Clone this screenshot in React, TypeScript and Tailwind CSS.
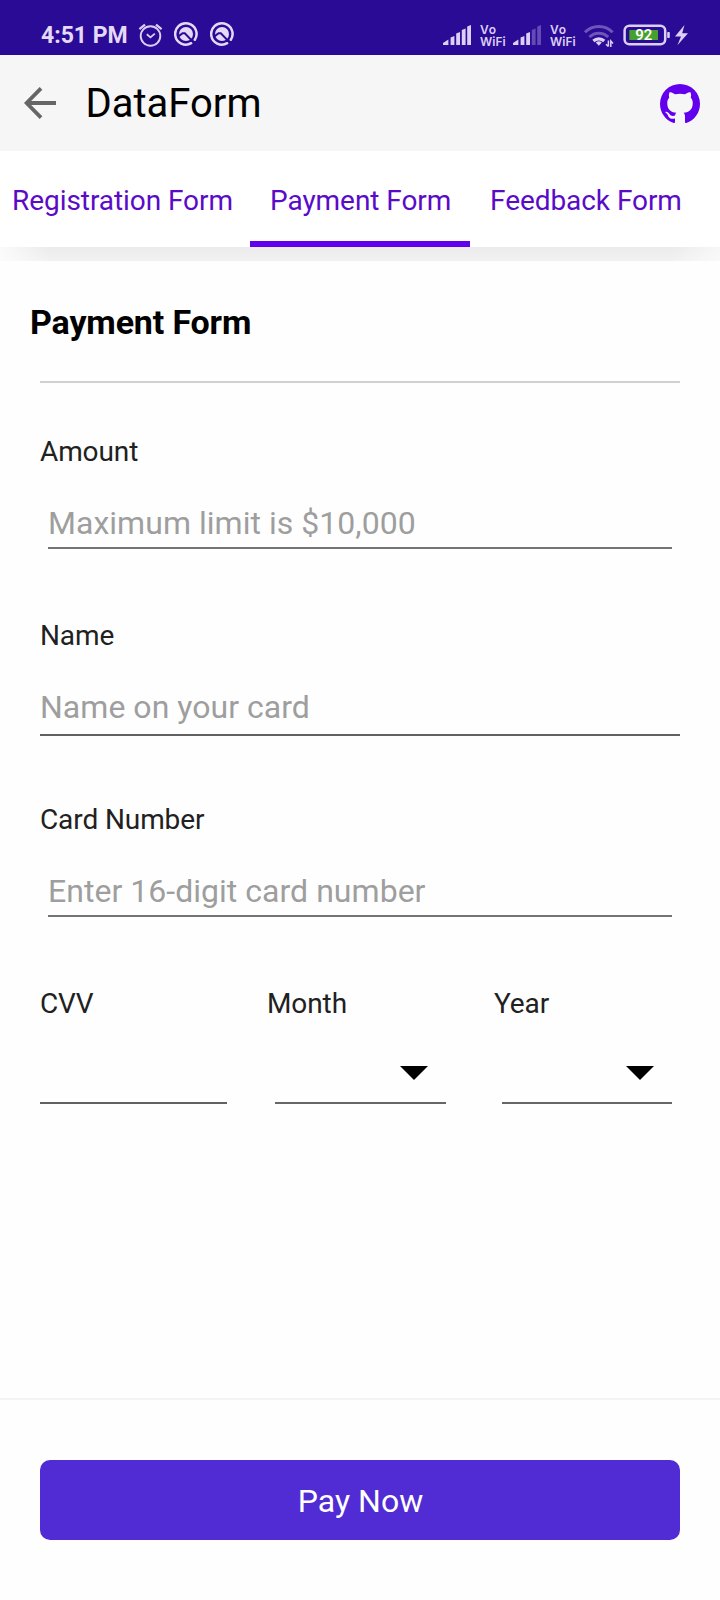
import React from "react";

const SIGNAL_X = [443, 450.6, 456.2, 461.8, 467.2];
const SIGNAL_TOP = [40.5, 36, 32, 28.5, 25];

function Signal({ strength }: { strength: number }) {
  return (
    <svg className="h-[55px] w-[30px]" viewBox="442 0 30 55" fill="#dccff5">
      <path d="M443 45V43L448.4 39.5V45Z" />
      {SIGNAL_X.slice(1).map((x, i) => (
        <path
          key={x}
          opacity={i + 1 < strength ? 1 : 0.32}
          d={`M${x} 45V${SIGNAL_TOP[i + 1] + 1.5}L${x + 3.8} ${SIGNAL_TOP[i + 1]}V45Z`}
        />
      ))}
    </svg>
  );
}

function VoWifi() {
  return (
    <div className="w-7 pt-6 font-[Inter,sans-serif] text-[12px] font-semibold leading-[12px] text-[#dccff5]">
      <div className="tracking-[0.8px]">Vo</div>
      <div>WiFi</div>
    </div>
  );
}

function CircleBadge() {
  return (
    <svg className="h-[55px] w-6" viewBox="174 0 24 55" fill="none">
      <path d="M191.2 43.2A10.7 10.7 0 1 1 194.8 39.8" stroke="#e4daf8" strokeWidth="2.5" strokeLinecap="round" />
      <circle cx="186" cy="34" r="7" fill="#e4daf8" />
      <path d="M178.4 36.4L182.6 33.2H184.8L193.6 42.4" stroke="#2a0b95" strokeWidth="2" />
    </svg>
  );
}

function StatusBar() {
  return (
    <div className="flex h-[55px] items-start bg-[#2a0b95] pl-[41px] pr-[30px]">
      <div className="w-[85px] whitespace-nowrap pt-[21px] text-[23px] font-bold leading-[30px] text-[#e4daf8]">4:51 PM</div>
      <svg className="ml-3 h-[55px] w-[25px]" viewBox="138 0 25 55" fill="none" stroke="#dccff5" strokeWidth="1.9">
        <circle cx="150.5" cy="36" r="9.8" />
        <path d="M146.8 34.2L150.5 37.4L154.8 33.6" strokeWidth="1.8" />
        <path d="M139.4 29.2L145 24.6M161.6 29.2L156 24.6" strokeWidth="2.2" />
      </svg>
      <div className="ml-[11px] flex gap-3">
        <CircleBadge />
        <CircleBadge />
      </div>
      <div className="ml-auto flex">
        <Signal strength={5} />
        <div className="ml-2"><VoWifi /></div>
        <div className="ml-1"><Signal strength={3} /></div>
        <div className="ml-2"><VoWifi /></div>
        <svg className="ml-[5px] h-[55px] w-8" viewBox="583 0 32 55" fill="none" stroke="#dccff5">
          <path d="M585 32.3A19.5 19.5 0 0 1 612.6 32.3" strokeWidth="3" opacity="0.38" />
          <path d="M589.4 37A13.5 13.5 0 0 1 608.2 37" strokeWidth="3" opacity="0.38" />
          <path d="M593.4 41A7.8 7.8 0 0 1 604.2 41" strokeWidth="3.2" />
          <path d="M595.8 42.6A4.4 4.4 0 0 1 601.8 42.6L598.8 45.8Z" fill="#dccff5" stroke="none" />
          <path d="M608.4 40.5V46.5M606 44.2L608.4 46.5M610.8 47V41L613 43.4" strokeWidth="1.5" />
        </svg>
        <svg className="ml-[7px] h-[55px] w-[68px]" viewBox="622 0 68 55" fill="#dccff5">
          <rect x="624.6" y="25.7" width="40.6" height="18.6" rx="4.8" fill="none" stroke="#dccff5" strokeWidth="2.5" />
          <rect x="629.3" y="30" width="28.7" height="10" fill="#45a02c" />
          <text x="643.7" y="40.3" textAnchor="middle" className="fill-white text-[15px] font-semibold">92</text>
          <rect x="667.2" y="32" width="2.6" height="6" rx="0.8" />
          <path d="M684.5 25L675 36.5H681L677.4 45.2L688 33.2H682.2Z" />
        </svg>
      </div>
    </div>
  );
}

function AppBar() {
  return (
    <header className="flex h-24 items-center bg-[#f6f6f6] pl-6 pr-5">
      <svg className="h-8 w-8" viewBox="0 0 32 32" fill="none" stroke="#666666" strokeWidth="3.8">
        <path d="M32 16H3M17 1.4L2.6 16L17 30.6" />
      </svg>
      <h1 className="ml-[29.5px] pt-0.5 text-[40px] leading-[48px] text-black">DataForm</h1>
      <svg className="ml-auto mt-px h-10 w-10" viewBox="2 2 20 20" fill="#6200ee">
        <path d="M12,2A10,10 0 0,0 2,12C2,16.42 4.87,20.17 8.84,21.5C9.34,21.58 9.5,21.27 9.5,21C9.5,20.77 9.5,20.14 9.5,19.31C6.73,19.91 6.14,17.97 6.14,17.97C5.68,16.81 5.03,16.5 5.03,16.5C4.12,15.88 5.1,15.9 5.1,15.9C6.1,15.97 6.63,16.93 6.63,16.93C7.5,18.45 8.97,18 9.54,17.76C9.63,17.11 9.89,16.67 10.17,16.42C7.95,16.17 5.62,15.31 5.62,11.5C5.62,10.39 6,9.5 6.65,8.79C6.55,8.54 6.2,7.5 6.75,6.15C6.75,6.15 7.59,5.88 9.5,7.17C10.29,6.95 11.15,6.84 12,6.84C12.85,6.84 13.71,6.95 14.5,7.17C16.41,5.88 17.25,6.15 17.25,6.15C17.8,7.5 17.45,8.54 17.35,8.79C18,9.5 18.38,10.39 18.38,11.5C18.38,15.32 16.04,16.16 13.81,16.41C14.17,16.72 14.5,17.33 14.5,18.26C14.5,19.6 14.5,20.68 14.5,21C14.5,21.27 14.66,21.59 15.17,21.5C19.14,20.16 22,16.42 22,12A10,10 0 0,0 12,2Z" />
      </svg>
    </header>
  );
}

function Tabs() {
  const tab = "flex h-24 items-start whitespace-nowrap pt-[30px] text-[28px] leading-10 tracking-[-0.06px] text-[#5a0bc8]";
  return (
    <nav className="flex h-24 bg-white">
      <button className={`${tab} w-[250px] pl-3`}>Registration Form</button>
      <button className={`${tab} w-[220px] border-b-[6px] border-[#6200ee] pl-5`}>Payment Form</button>
      <button className={`${tab} w-[250px] pl-5`}>Feedback Form</button>
    </nav>
  );
}

const LABEL = "block h-10 pt-px text-[28px] leading-10 tracking-[-0.1px] text-[#212121]";

function Field({ label, placeholder, inset }: { label: string; placeholder: string; inset: boolean }) {
  return (
    <label className={`block h-[184px] ${inset ? "px-2" : ""}`}>
      <span className={`${LABEL} ${inset ? "-ml-2" : ""}`}>{label}</span>
      <input
        className={`mt-8 block w-full border-b-2 p-0 text-[32px] leading-10 tracking-[0.03px] outline-none placeholder:text-[#9e9e9e] ${
          inset ? "h-[46px] border-[#757575] pb-1" : "h-[49px] border-[#616161] pb-[7px]"
        }`}
        placeholder={placeholder}
      />
    </label>
  );
}

function Picker({ label }: { label: string }) {
  return (
    <div>
      <span className={LABEL}>{label}</span>
      <div className="ml-2 mt-8 flex h-[49px] justify-end border-b-2 border-[#666666] pr-[18px] pt-[11px]">
        <svg className="h-[14px] w-7" viewBox="0 0 28 14">
          <path d="M0 0H28L14 14Z" />
        </svg>
      </div>
    </div>
  );
}

export default function App() {
  return (
    <div className="flex h-[1600px] w-[720px] flex-col bg-[#fefefe] font-[Roboto,sans-serif]">
      <StatusBar />
      <AppBar />
      <Tabs />
      <div className="h-[14px] bg-linear-to-b from-[#ebebeb] to-[#f2f2f2]">
        <div className="h-full bg-linear-to-r from-white/80 via-transparent via-7% to-transparent">
          <div className="h-full bg-linear-to-l from-white/60 via-transparent via-7% to-transparent" />
        </div>
      </div>
      <h2 className="ml-[30px] mt-[41px] text-[34px] font-bold leading-10 tracking-[-0.15px] text-black">Payment Form</h2>
      <main className="mx-10 mt-[39px] flex-1 border-t-2 border-[#d0d0d0] pt-12">
        <Field label="Amount" placeholder="Maximum limit is $10,000" inset />
        <Field label="Name" placeholder="Name on your card" inset={false} />
        <Field label="Card Number" placeholder="Enter 16-digit card number" inset />
        <div className="flex">
          <label className="w-[187px]">
            <span className={LABEL}>CVV</span>
            <input className="mt-8 block h-[49px] w-full border-b-2 border-[#616161] outline-none" />
          </label>
          <div className="ml-10 w-[179px]"><Picker label="Month" /></div>
          <div className="ml-12 w-[178px]"><Picker label="Year" /></div>
        </div>
      </main>
      <footer className="h-[202px] border-t-2 border-[#f4f4f4] px-10 pt-[60px]">
        <button className="h-20 w-full rounded-[10px] bg-[#512bd4] pl-px pt-0.5 text-[32px] leading-10 text-white">Pay Now</button>
      </footer>
    </div>
  );
}
